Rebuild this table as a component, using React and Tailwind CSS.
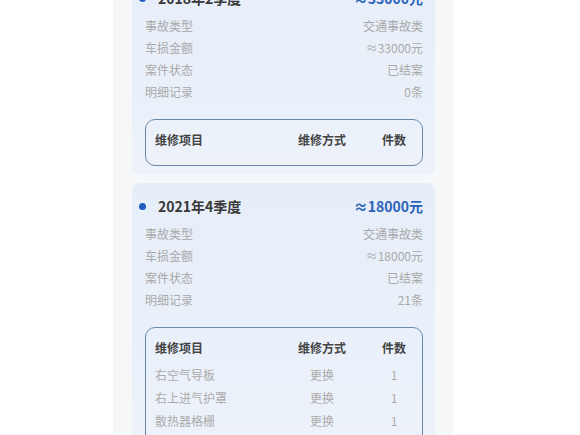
import React from "react";

const records = [
  {
    period: "2018年2季度",
    amount: "≈33000元",
    info: [
      ["事故类型", "交通事故类"],
      ["车损金额", "≈33000元"],
      ["案件状态", "已结案"],
      ["明细记录", "0条"],
    ],
    items: [],
  },
  {
    period: "2021年4季度",
    amount: "≈18000元",
    info: [
      ["事故类型", "交通事故类"],
      ["车损金额", "≈18000元"],
      ["案件状态", "已结案"],
      ["明细记录", "21条"],
    ],
    items: [
      ["右空气导板", "更换", "1"],
      ["右上进气护罩", "更换", "1"],
      ["散热器格栅", "更换", "1"],
    ],
  },
];

function RepairTable({ items }) {
  return (
    <div className="mt-[16px] rounded-[10px] border border-[#6a88ab] pl-[9px] pr-[8px] pt-[9px] pb-[14px]">
      <div className="grid grid-cols-[1fr_60px_40px] gap-x-[22px] h-[22px] items-center text-[12px] font-bold text-[#454545]">
        <span>维修项目</span>
        <span className="text-center">维修方式</span>
        <span className="text-center">件数</span>
      </div>
      {items.length > 0 && (
        <div className="mt-[4px]">
          {items.map(([name, way, count]) => (
            <div key={name} className="grid grid-cols-[1fr_60px_40px] gap-x-[22px] h-[23px] items-center text-[12px] text-[#ababab]">
              <span>{name}</span>
              <span className="text-center">{way}</span>
              <span className="text-center">{count}</span>
            </div>
          ))}
        </div>
      )}
    </div>
  );
}

function RecordCard({ record, className }) {
  return (
    <div className={"rounded-[8px] bg-gradient-to-b from-[#e6eef9] to-[#edf2fa] pl-[13px] pr-[12px] pt-[12px] pb-[9px] " + className}>
      <div className="flex items-center h-[22px] mb-[6px]">
        <span className="w-[7px] h-[7px] rounded-full bg-[#1f5cc0] -ml-[6px]"></span>
        <span className="ml-[12px] text-[14px] font-bold text-[#383838]">{record.period}</span>
        <span className="ml-auto text-[14px] font-bold text-[#2b63b8]">{record.amount}</span>
      </div>
      {record.info.map(([label, value]) => (
        <div key={label} className="flex justify-between items-center h-[22px] text-[12px] text-[#a9a9a9]">
          <span>{label}</span>
          <span>{value}</span>
        </div>
      ))}
      <RepairTable items={record.items} />
    </div>
  );
}

export default function App() {
  return (
    <div
      className="h-[435px] w-full overflow-hidden bg-white flex pl-[113px]"
      style={{ fontFamily: '"Noto Sans CJK SC", "Noto Sans", sans-serif' }}
    >
      <div className="w-[340px] bg-[#f6f7f9] pl-[19px] pr-[18px] flex flex-col gap-[8px]">
        <RecordCard record={records[0]} className="-mt-[25px]" />
        <RecordCard record={records[1]} className="" />
      </div>
    </div>
  );
}
